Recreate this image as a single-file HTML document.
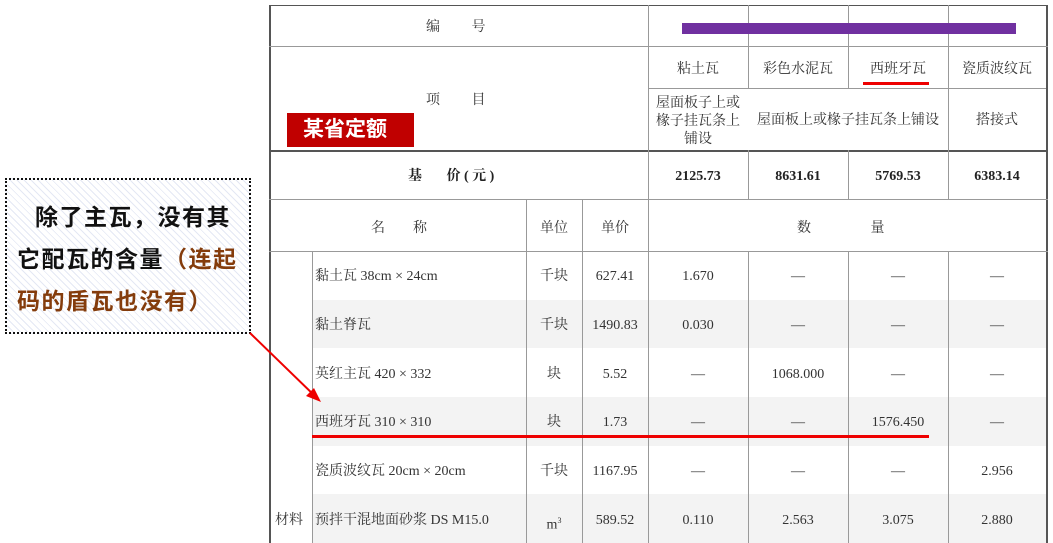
<!DOCTYPE html>
<html><head><meta charset="utf-8"><style>
*{margin:0;padding:0;box-sizing:border-box}
body{width:1053px;height:543px;background:#fff;position:relative;overflow:hidden;font-family:"Liberation Serif","Noto Serif CJK SC",serif;color:#333}
.h{position:absolute;height:1px;background:#999}
.v{position:absolute;width:1px;background:#999}
.t{position:absolute;font-size:14px;text-align:center;line-height:16px;white-space:nowrap;transform:translateY(2px)}
.shade{position:absolute;background:#f3f3f3}
.b{font-weight:bold;color:#222}
</style></head><body>
<div class="shade" style="left:312px;top:300px;width:734px;height:48px"></div>
<div class="shade" style="left:312px;top:397px;width:734px;height:49px"></div>
<div class="shade" style="left:312px;top:494px;width:734px;height:49px"></div>
<div class="v" style="left:269px;top:5px;height:538px;width:2px;background:#555"></div>
<div class="v" style="left:1046px;top:5px;height:538px;width:2px;background:#555"></div>
<div class="h" style="left:269px;top:5px;width:779px;background:#555"></div>
<div class="h" style="left:269px;top:46px;width:779px"></div>
<div class="h" style="left:648px;top:88px;width:398px"></div>
<div class="h" style="left:269px;top:150px;width:779px;height:2px;background:#555"></div>
<div class="h" style="left:269px;top:199px;width:779px"></div>
<div class="h" style="left:269px;top:251px;width:779px"></div>
<div class="v" style="left:648px;top:5px;height:538px"></div>
<div class="v" style="left:748px;top:5px;height:83px"></div>
<div class="v" style="left:748px;top:150px;height:49px"></div>
<div class="v" style="left:848px;top:5px;height:83px"></div>
<div class="v" style="left:848px;top:150px;height:49px"></div>
<div class="v" style="left:948px;top:5px;height:194px"></div>
<div class="v" style="left:748px;top:251px;height:292px"></div>
<div class="v" style="left:848px;top:251px;height:292px"></div>
<div class="v" style="left:948px;top:251px;height:292px"></div>
<div class="v" style="left:312px;top:251px;height:292px"></div>
<div class="v" style="left:526px;top:199px;height:344px"></div>
<div class="v" style="left:582px;top:199px;height:344px"></div>

<div class="t" style="left:426px;top:18px">编&nbsp;&nbsp;&nbsp;&nbsp;&nbsp;&nbsp;&nbsp;&nbsp;&nbsp;号</div>
<div class="t" style="left:426px;top:91px">项&nbsp;&nbsp;&nbsp;&nbsp;&nbsp;&nbsp;&nbsp;&nbsp;&nbsp;目</div>
<div style="position:absolute;left:287px;top:113px;width:127px;height:34px;background:#c00000;color:#fff;font:bold 21px 'Liberation Sans','Noto Sans CJK SC',sans-serif;line-height:34px;padding-left:16px">某省定额</div>
<div class="t b" style="left:408px;top:167px">基&nbsp;&nbsp;&nbsp;&nbsp;&nbsp;&nbsp;&nbsp;价 ( 元 )</div>
<div style="position:absolute;left:682px;top:23px;width:334px;height:11px;background:#7030a0"></div>
<div class="t" style="left:648px;width:100px;top:60px">粘土瓦</div>
<div class="t" style="left:748px;width:100px;top:60px">彩色水泥瓦</div>
<div class="t" style="left:848px;width:100px;top:60px">西班牙瓦</div>
<div style="position:absolute;left:863px;top:82px;width:66px;height:3px;background:#e00"></div>
<div class="t" style="left:948px;width:98px;top:60px">瓷质波纹瓦</div>
<div class="t" style="left:648px;width:100px;top:93px;line-height:18px">屋面板子上或<br>椽子挂瓦条上<br>铺设</div>
<div class="t" style="left:748px;width:200px;top:111px">屋面板上或椽子挂瓦条上铺设</div>
<div class="t" style="left:948px;width:98px;top:111px">搭接式</div>
<div class="t b" style="left:648px;width:100px;top:167px">2125.73</div>
<div class="t b" style="left:748px;width:100px;top:167px">8631.61</div>
<div class="t b" style="left:848px;width:100px;top:167px">5769.53</div>
<div class="t b" style="left:948px;width:98px;top:167px">6383.14</div>

<div class="t" style="left:371px;top:219px">名&nbsp;&nbsp;&nbsp;&nbsp;&nbsp;&nbsp;&nbsp;&nbsp;称</div>
<div class="t" style="left:526px;width:56px;top:219px">单位</div>
<div class="t" style="left:582px;width:66px;top:219px">单价</div>
<div class="t" style="left:797px;top:219px">数&nbsp;&nbsp;&nbsp;&nbsp;&nbsp;&nbsp;&nbsp;&nbsp;&nbsp;&nbsp;&nbsp;&nbsp;&nbsp;&nbsp;&nbsp;&nbsp;&nbsp;量</div>

<div class="t" style="left:315px;top:267px;text-align:left">黏土瓦 38cm × 24cm</div>
<div class="t" style="left:315px;top:316px;text-align:left">黏土脊瓦</div>
<div class="t" style="left:315px;top:365px;text-align:left">英红主瓦 420 × 332</div>
<div class="t" style="left:315px;top:413px;text-align:left">西班牙瓦 310 × 310</div>
<div class="t" style="left:315px;top:462px;text-align:left">瓷质波纹瓦 20cm × 20cm</div>
<div class="t" style="left:315px;top:511px;text-align:left">预拌干混地面砂浆 DS M15.0</div>
<div class="t" style="left:275px;top:511px">材料</div>

<div class="t" style="left:526px;width:56px;top:267px">千块</div>
<div class="t" style="left:526px;width:56px;top:316px">千块</div>
<div class="t" style="left:526px;width:56px;top:365px">块</div>
<div class="t" style="left:526px;width:56px;top:413px">块</div>
<div class="t" style="left:526px;width:56px;top:462px">千块</div>
<div class="t" style="left:526px;width:56px;top:511px">m<sup style="font-size:8px">3</sup></div>

<div class="t" style="left:582px;width:66px;top:267px">627.41</div>
<div class="t" style="left:582px;width:66px;top:316px">1490.83</div>
<div class="t" style="left:582px;width:66px;top:365px">5.52</div>
<div class="t" style="left:582px;width:66px;top:413px">1.73</div>
<div class="t" style="left:582px;width:66px;top:462px">1167.95</div>
<div class="t" style="left:582px;width:66px;top:511px">589.52</div>

<div class="t" style="left:648px;width:100px;top:267px">1.670</div>
<div class="t" style="left:748px;width:100px;top:267px">—</div>
<div class="t" style="left:848px;width:100px;top:267px">—</div>
<div class="t" style="left:948px;width:98px;top:267px">—</div>
<div class="t" style="left:648px;width:100px;top:316px">0.030</div>
<div class="t" style="left:748px;width:100px;top:316px">—</div>
<div class="t" style="left:848px;width:100px;top:316px">—</div>
<div class="t" style="left:948px;width:98px;top:316px">—</div>
<div class="t" style="left:648px;width:100px;top:365px">—</div>
<div class="t" style="left:748px;width:100px;top:365px">1068.000</div>
<div class="t" style="left:848px;width:100px;top:365px">—</div>
<div class="t" style="left:948px;width:98px;top:365px">—</div>
<div class="t" style="left:648px;width:100px;top:413px">—</div>
<div class="t" style="left:748px;width:100px;top:413px">—</div>
<div class="t" style="left:848px;width:100px;top:413px">1576.450</div>
<div class="t" style="left:948px;width:98px;top:413px">—</div>
<div class="t" style="left:648px;width:100px;top:462px">—</div>
<div class="t" style="left:748px;width:100px;top:462px">—</div>
<div class="t" style="left:848px;width:100px;top:462px">—</div>
<div class="t" style="left:948px;width:98px;top:462px">2.956</div>
<div class="t" style="left:648px;width:100px;top:511px">0.110</div>
<div class="t" style="left:748px;width:100px;top:511px">2.563</div>
<div class="t" style="left:848px;width:100px;top:511px">3.075</div>
<div class="t" style="left:948px;width:98px;top:511px">2.880</div>

<div style="position:absolute;left:312px;top:435px;width:617px;height:3px;background:#e00"></div>

<div style="position:absolute;left:5px;top:178px;width:246px;height:156px;border:2px dotted #111;background:repeating-linear-gradient(45deg,#fff 0 4px,#e4e8f4 4px 5px),#fff;font:bold 23px 'Liberation Sans','Noto Sans CJK SC',sans-serif;color:#111;line-height:42px;padding:16px 0 0 10px;letter-spacing:1.5px;white-space:nowrap">
<div style="padding-left:18px">除了主瓦，没有其</div>
<div>它配瓦的含量<span style="color:#843c0c">（连起</span></div>
<div style="color:#843c0c">码的盾瓦也没有）</div>
</div>
<svg style="position:absolute;left:0;top:0" width="1053" height="543">
<line x1="250" y1="333" x2="318" y2="399" stroke="#e00" stroke-width="2"/>
<polygon points="321,402 306,396 314,388" fill="#e00"/>
</svg>
</body></html>
